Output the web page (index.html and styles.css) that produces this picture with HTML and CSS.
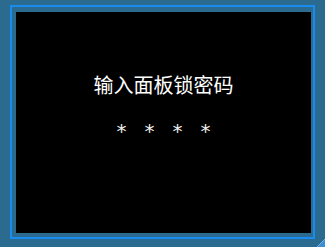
FILE: index.html
```html
<!DOCTYPE html>
<html lang="zh-CN">
<head>
<meta charset="UTF-8" />
<meta name="viewport" content="width=device-width,initial-scale=1" />
<title>面板锁</title>
<link rel="stylesheet" href="styles.css">
</head>

<body>
<div class="frame">
    <div class="screen">
        <div class="title">输入面板锁密码</div>
        <div class="stars">
            <span>*</span>
            <span>*</span>
            <span>*</span>
            <span>*</span>
        </div>
    </div>
</div>

<!-- 右下角的拖动角 -->
<svg class="grip" width="8" height="8" viewBox="0 0 8 8">
    <polygon points="8,0 8,8 0,8" fill="#3f8fd0" />
    <line x1="0" y1="8" x2="8" y2="0" stroke="#6fb2e6" stroke-width="1" />
</svg>
</body>
</html>
```

FILE: styles.css
```css
*{margin:0;padding:0;box-sizing:border-box}
html,body{
    width:325px;
    height:247px;
    overflow:hidden;
}
body{
    background:#2c6b90;
    font-family:'Noto Sans CJK SC','DejaVu Sans',sans-serif;
    position:relative;
    padding:5px 0 0 10px;
}
.frame{
    width:305px;
    height:234px;
    border:2px solid #1a8cf0;
    padding:5px 2px 4px 4px;
}
.screen{
    width:100%;
    height:100%;
    background:#000;
    display:flex;
    flex-direction:column;
    align-items:center;
}
.title{
    margin-top:62px;
    font-size:20px;
    line-height:22px;
    color:#fff;
}
.stars{
    display:flex;
    gap:15px;
    margin-top:25px;
    font-family:'DejaVu Sans',sans-serif;
    font-size:20px;
    line-height:20px;
    color:#eee;
}
.stars span{
    width:13px;
    text-align:center;
}
.grip{
    position:absolute;
    left:317px;
    top:239px;
}
```
